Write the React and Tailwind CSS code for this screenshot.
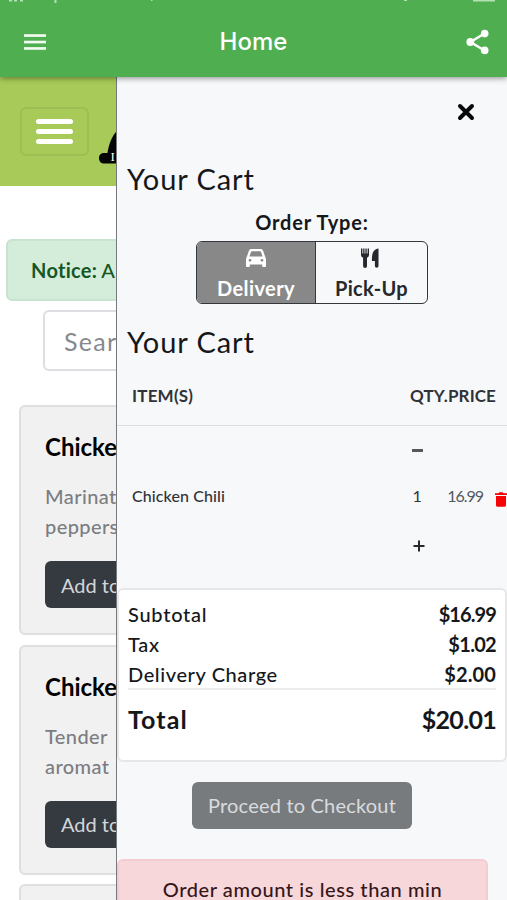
import { useState } from "react";

const MENU = [
  { id: 1, name: "Chicken", lines: ["Marinat", "peppers"] },
  { id: 2, name: "Chicken", lines: ["Tender", "aromat"] },
  { id: 3, name: "Chicken", lines: ["Creamy", "almond"] },
];

function StatusBar() {
  return (
    <svg className="block h-1 w-full shrink-0" viewBox="0 0 507 4" fill="#b5e0b6">
      <rect x="9" width="3" height="1.5" />
      <rect x="14" width="3" height="1.5" />
      <rect x="20" width="3" height="1.5" />
      <rect x="54.500" width="2" height="3" />
      <rect x="151" width="1.500" height="1" />
      <rect x="404" width="3" height="1" />
      <rect x="473" width="22" height="1.500" />
    </svg>
  );
}

function MenuIcon() {
  return (
    <svg className="h-4 w-[22px]" viewBox="0 0 22 16" fill="#f1fbf1">
      <rect y="0.200" width="22" height="2.700" />
      <rect y="6.700" width="22" height="2.700" />
      <rect y="13.100" width="22" height="2.700" />
    </svg>
  );
}

function ShareIcon() {
  return (
    <svg className="h-[26px] w-[23px]" viewBox="0 0 23 26" fill="#fff">
      <path d="M18.500 4.500L4.500 13l14 8.500" fill="none" stroke="#fff" strokeWidth="2.500" />
      <circle cx="18.700" cy="4.600" r="3.800" />
      <circle cx="4.300" cy="13" r="3.900" />
      <circle cx="18.700" cy="21.400" r="3.800" />
    </svg>
  );
}

function CarIcon() {
  return (
    <svg className="h-[18px] w-5" viewBox="0 0 20 18" fill="currentColor" fillRule="evenodd">
      <path d="M5.300 0h9.400c1.100 0 1.900.6 2.300 1.600L19.300 8c.4.800.7 1.600.7 2.500V17c0 .6-.4 1-1 1h-1.800c-.6 0-1-.4-1-1v-1.500H3.800V17c0 .6-.4 1-1 1H1c-.6 0-1-.4-1-1v-6.500C0 9.600.3 8.800.7 8L3 1.600C3.400.6 4.200 0 5.300 0zM5.800 2.300c-.4 0-.6.200-.7.500L3.400 7.500h13.200l-1.700-4.700c-.1-.3-.3-.5-.7-.5zM4 9.900a1.400 1.400 0 1 0 0 2.800 1.400 1.400 0 0 0 0-2.800zM16 9.900a1.400 1.400 0 1 0 0 2.800 1.400 1.400 0 0 0 0-2.800z" />
    </svg>
  );
}

function CutleryIcon() {
  return (
    <svg className="h-5 w-[18px]" viewBox="0 0 18 20" fill="currentColor">
      <path d="M0 0.500h1.400v5h.8v-5h1.300v5h.9v-5h1.300v5h.9v-5H8v6.300C8 8.600 7 9.400 6 9.800V18a1.800 1.800 0 0 1-3.900 0V9.800C1 9.400 0 8.600 0 6.800z" />
      <path d="M17.500 0.500V18a1.800 1.800 0 0 1-3.600 0v-5h-2.400c-.4 0-.6-.2-.6-.6C10.700 5.600 12.500 1 17.500.500z" />
    </svg>
  );
}

function TrashIcon() {
  return (
    <svg className="h-[15px] w-3" viewBox="0 0 12 15" fill="#f50505">
      <path d="M0 1.200h3.500L4.300.200h3.400l.8 1H12v1.800H0zM1 4h10v9.300c0 .9-.5 1.400-1.300 1.400H2.300C1.500 14.700 1 14.200 1 13.300z" />
    </svg>
  );
}

function HatLogo() {
  return (
    <svg className="h-9 w-9 shrink-0" viewBox="0 0 36 36">
      <path d="M22 0C14 4 10 15 8.500 25H5c-7 0-6.500 10.500 0 10.500h31V0z" fill="#050505" />
      <text x="11.500" y="33" fill="#fff" fontSize="13" fontFamily="Liberation Serif, serif">
        I
      </text>
    </svg>
  );
}

function MenuCard({ item }) {
  return (
    <div className="h-[230px] w-[460px] shrink-0 rounded-md border-2 border-[#dedfdf] bg-[#f1f1f1] px-6 pt-[25px]">
      <h3 className="text-[24px] leading-[30px] font-bold whitespace-nowrap text-black">{item.name}</h3>
      <p className="mt-[19px] text-[20px] leading-[30px] font-medium tracking-[0.400px] text-[#7b7d81]">
        {item.lines.map((line) => (
          <span key={line} className="block">{line}</span>
        ))}
      </p>
      <button className="mt-5 h-[47px] w-[120px] rounded-md bg-[#343a40] pl-4 text-left text-[20px] text-[#d3d6d9]">
        Add to
      </button>
    </div>
  );
}

function MenuPage() {
  return (
    <main className="w-[116px] shrink-0 overflow-hidden bg-white">
      <div className="flex h-[109px] w-[507px] items-center bg-[#a8ca58] pl-5">
        <button className="flex h-[49px] w-[69px] flex-col items-center justify-center gap-[5.500px] rounded-md border-2 border-[#9dbe53]">
          <span className="h-[4.500px] w-[37px] rounded-sm bg-white" />
          <span className="h-[4.500px] w-[37px] rounded-sm bg-white" />
          <span className="h-[4.500px] w-[37px] rounded-sm bg-white" />
        </button>
        <div className="mt-7 ml-2.5">
          <HatLogo />
        </div>
      </div>
      <div className="mt-[53px] ml-1.5 flex h-[62px] w-[494px] items-center rounded-md border-2 border-[#c8e4cf] bg-[#d4edda] pl-[23px] text-[20px] text-[#155724]">
        <strong className="font-bold tracking-[0.300px]">Notice:</strong>
        <span className="ml-1 font-medium">A</span>
      </div>
      <input
        placeholder="Sear"
        className="mt-[9px] ml-[43px] block h-[61px] w-[420px] rounded-md border-2 border-[#dcdee1] bg-white pl-[19px] text-[25px] tracking-[1.300px] outline-none placeholder:text-[#85898e]"
      />
      <div className="mt-[34px] ml-[19px] flex flex-col gap-[9.500px]">
        {MENU.map((item) => (
          <MenuCard key={item.id} item={item} />
        ))}
      </div>
    </main>
  );
}

function OrderType({ value, onChange }) {
  const base = "flex h-full flex-col items-center text-[20px] font-bold";
  return (
    <div className="mx-auto flex h-[63px] w-[232px] overflow-hidden rounded-md border-[1.500px] border-[#34373b]">
      <button
        onClick={() => onChange("delivery")}
        className={`${base} w-[119px] border-r border-[#34373b] ${value === "delivery" ? "bg-[#888888] text-white" : "text-[#25282c]"}`}
      >
        <span className="mt-[7px] flex h-[24px]"><CarIcon /></span>
        <span className="leading-[30px] tracking-[0.400px]">Delivery</span>
      </button>
      <button
        onClick={() => onChange("pickup")}
        className={`${base} flex-1 ${value === "pickup" ? "bg-[#888888] text-white" : "text-[#25282c]"}`}
      >
        <span className="mt-[6px] flex h-[25px] pr-1"><CutleryIcon /></span>
        <span className="leading-[30px] tracking-[0.300px]">Pick-Up</span>
      </button>
    </div>
  );
}

function CartDrawer() {
  const [orderType, setOrderType] = useState("delivery");
  const [qty, setQty] = useState(1);

  return (
    <aside className="flex min-w-0 flex-1 flex-col overflow-hidden border-l border-[#77787b] bg-[#f7f8fa] text-[#15171a]">
      <div className="flex h-[83px] shrink-0 justify-end pt-[26px] pr-8">
        <button className="h-[18px] w-[18px]">
          <svg viewBox="0 0 18 18" stroke="#08090b" strokeWidth="4" strokeLinecap="round">
            <path d="M3 3l12 12M15 3L3 15" />
          </svg>
        </button>
      </div>
      <h2 className="pl-2.5 text-[29px] leading-[38px] tracking-[0.900px]">Your Cart</h2>
      <p className="mt-[9px] text-center text-[20px] leading-[30px] font-bold tracking-[0.800px]">Order Type:</p>
      <div className="mt-1">
        <OrderType value={orderType} onChange={setOrderType} />
      </div>
      <h2 className="mt-[19px] pl-2.5 text-[29px] leading-[38px] tracking-[0.900px]">Your Cart</h2>

      <div className="mt-[17px] flex h-[48px] shrink-0 border-b border-[#dadde1] pt-1.5 pr-[11px] pl-[15px] text-[17px] leading-6 font-bold text-[#303338]">
        <span className="flex-1 tracking-[0.200px]">ITEM(S)</span>
        <span className="tracking-[0.200px]">QTY.</span>
        <span className="tracking-[0.100px]">PRICE</span>
      </div>
      <div className="flex h-[162px] shrink-0 items-center pb-[22px] pl-[15px] text-[16px] text-[#303338]">
        <span className="w-[270px] font-medium tracking-[0.100px]">Chicken Chili</span>
        <div className="flex w-8 flex-col items-center">
          <button onClick={() => setQty(Math.max(1, qty - 1))} className="flex h-[47px] w-5 items-start justify-center">
            <span className="mt-[24px] h-[3px] w-[11px] bg-[#55585d]" />
          </button>
          <span className="flex h-12 items-center">{qty}</span>
          <button onClick={() => setQty(qty + 1)} className="flex h-[47px] w-5 items-center justify-center pt-[5px] pl-1">
            <svg className="h-3 w-3 shrink-0" viewBox="0 0 12 12" stroke="#25282c" strokeWidth="2">
              <path d="M6 .5v11M.5 6h11" />
            </svg>
          </button>
        </div>
        <span className="ml-3.5 w-12 tracking-[-1px] text-[#55585d]">16.99</span>
        <span className="mt-[6px] shrink-0"><TrashIcon /></span>
      </div>

      <div className="h-[174px] shrink-0 rounded-md border-2 border-[#e5e7e9] bg-white px-[9px] pt-[9px] text-[20px] leading-[30px] font-medium">
        <div className="flex justify-between">
          <span className="tracking-[0.750px]">Subtotal</span>
          <b className="tracking-[-0.900px]">$16.99</b>
        </div>
        <div className="flex justify-between">
          <span className="tracking-[0.700px]">Tax</span>
          <b className="tracking-[-0.700px]">$1.02</b>
        </div>
        <div className="flex h-[31px] justify-between border-b-2 border-[#ecedef]">
          <span className="tracking-[0.600px]">Delivery Charge</span>
          <b className="tracking-[0.100px]">$2.00</b>
        </div>
        <div className="mt-[11px] flex justify-between text-[25px] leading-9 font-bold">
          <span className="tracking-[1.100px]">Total</span>
          <span className="tracking-[-0.700px]">$20.01</span>
        </div>
      </div>
      <button className="mt-5 ml-[75px] h-[47px] w-[220px] shrink-0 rounded-md bg-[#787b7e] pb-0.5 text-[20px] tracking-[0.200px] text-[#d9dcdf]">
        Proceed to Checkout
      </button>
      <div className="mt-[30px] h-24 w-[371px] shrink-0 rounded-md border-2 border-[#f3ccd1] bg-[#f8d7db] pt-[13px] text-center text-[20px] leading-[30px] font-medium tracking-[0.580px] text-[#351619]">
        Order amount is less than min
      </div>
    </aside>
  );
}

export default function App() {
  return (
    <div className="flex h-[900px] w-[507px] flex-col overflow-hidden bg-white font-['Lato',sans-serif]">
      <header className="z-10 flex h-[77px] shrink-0 flex-col bg-[#4eae50] text-white shadow-[0_1px_6px_rgba(0,0,0,0.45)]">
        <StatusBar />
        <div className="flex h-[76px] shrink-0 items-center justify-between pr-[18px] pl-6">
          <MenuIcon />
          <h1 className="pr-[5px] font-[Inter,sans-serif] text-[24px] font-medium">Home</h1>
          <ShareIcon />
        </div>
      </header>
      <div className="flex min-h-0 flex-1">
        <MenuPage />
        <CartDrawer />
      </div>
    </div>
  );
}
